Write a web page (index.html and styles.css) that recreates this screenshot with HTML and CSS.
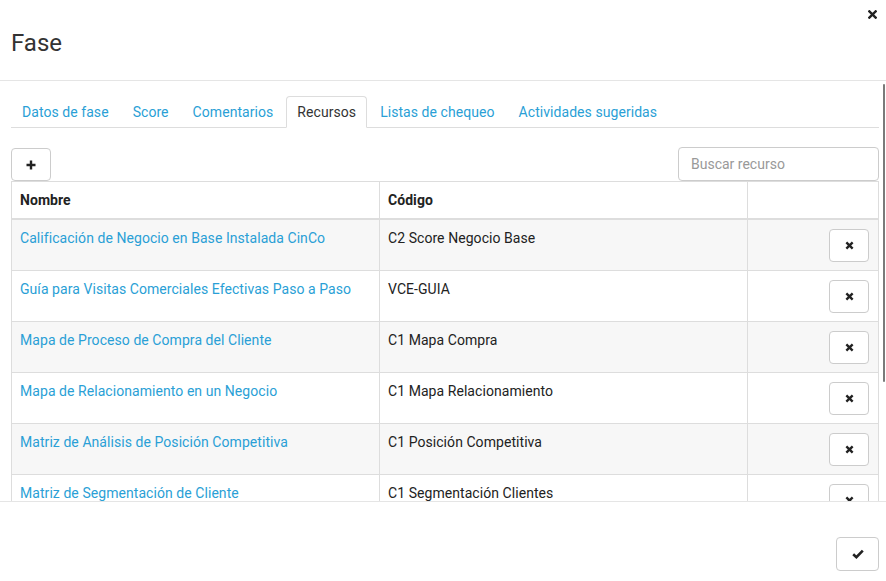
FILE: index.html
```html
<!DOCTYPE html>
<html lang="es">
<head>
<meta charset="utf-8">
<title>Fase</title>
<link rel="stylesheet" href="styles.css">
</head>
<body>
<div class="modal">
  <header class="modal-header">
    <h1 class="modal-title">Fase</h1>
    <button class="close" type="button" aria-label="Cerrar">
      <svg viewBox="0 0 10 10" width="9" height="9"><path d="M1.5 1.5 L8.5 8.5 M8.5 1.5 L1.5 8.5" stroke="#222" stroke-width="2.6" stroke-linecap="square"/></svg>
    </button>
  </header>
  <main class="modal-body">
    <ul class="tabs">
      <li><a href="#">Datos de fase</a></li>
      <li><a href="#">Score</a></li>
      <li><a href="#">Comentarios</a></li>
      <li class="active"><a href="#">Recursos</a></li>
      <li><a href="#">Listas de chequeo</a></li>
      <li><a href="#">Actividades sugeridas</a></li>
    </ul>
    <div class="toolbar">
      <button class="btn btn-add" type="button">
        <svg viewBox="0 0 10 10" width="10" height="10"><path d="M5 0.5 V9.5 M0.5 5 H9.5" stroke="#222" stroke-width="2.4"/></svg>
      </button>
      <input class="search" type="text" placeholder="Buscar recurso">
    </div>
    <table class="grid">
      <thead>
        <tr><th class="c-name">Nombre</th><th class="c-code">Código</th><th class="c-act"></th></tr>
      </thead>
      <tbody>
        <tr><td><a href="#">Calificación de Negocio en Base Instalada CinCo</a></td><td>C2 Score Negocio Base</td><td class="act"><button class="btn btn-del" type="button"><svg viewBox="0 0 10 10" width="9" height="9"><path d="M1.5 1.5 L8.5 8.5 M8.5 1.5 L1.5 8.5" stroke="#222" stroke-width="2.6"/></svg></button></td></tr>
        <tr><td><a href="#">Guía para Visitas Comerciales Efectivas Paso a Paso</a></td><td>VCE-GUIA</td><td class="act"><button class="btn btn-del" type="button"><svg viewBox="0 0 10 10" width="9" height="9"><path d="M1.5 1.5 L8.5 8.5 M8.5 1.5 L1.5 8.5" stroke="#222" stroke-width="2.6"/></svg></button></td></tr>
        <tr><td><a href="#">Mapa de Proceso de Compra del Cliente</a></td><td>C1 Mapa Compra</td><td class="act"><button class="btn btn-del" type="button"><svg viewBox="0 0 10 10" width="9" height="9"><path d="M1.5 1.5 L8.5 8.5 M8.5 1.5 L1.5 8.5" stroke="#222" stroke-width="2.6"/></svg></button></td></tr>
        <tr><td><a href="#">Mapa de Relacionamiento en un Negocio</a></td><td>C1 Mapa Relacionamiento</td><td class="act"><button class="btn btn-del" type="button"><svg viewBox="0 0 10 10" width="9" height="9"><path d="M1.5 1.5 L8.5 8.5 M8.5 1.5 L1.5 8.5" stroke="#222" stroke-width="2.6"/></svg></button></td></tr>
        <tr><td><a href="#">Matriz de Análisis de Posición Competitiva</a></td><td>C1 Posición Competitiva</td><td class="act"><button class="btn btn-del" type="button"><svg viewBox="0 0 10 10" width="9" height="9"><path d="M1.5 1.5 L8.5 8.5 M8.5 1.5 L1.5 8.5" stroke="#222" stroke-width="2.6"/></svg></button></td></tr>
        <tr><td><a href="#">Matriz de Segmentación de Cliente</a></td><td>C1 Segmentación Clientes</td><td class="act"><button class="btn btn-del" type="button"><svg viewBox="0 0 10 10" width="9" height="9"><path d="M1.5 1.5 L8.5 8.5 M8.5 1.5 L1.5 8.5" stroke="#222" stroke-width="2.6"/></svg></button></td></tr>
      </tbody>
    </table>
    <span class="scroll-thumb" aria-hidden="true"></span>
  </main>
  <footer class="modal-footer">
    <button class="btn btn-ok" type="button">
      <svg viewBox="0 0 12 10" width="12" height="10"><path d="M1.2 5.2 L4.4 8.2 L10.8 1.6" fill="none" stroke="#222" stroke-width="2.6"/></svg>
    </button>
  </footer>
</div>
</body>
</html>
```

FILE: styles.css
```css
* { box-sizing: border-box; }
html, body { margin: 0; padding: 0; background: #fff; }
body {
  font-family: Roboto, "Liberation Sans", Arial, sans-serif;
  font-size: 14px;
  line-height: 20px;
  letter-spacing: 0.06px;
  color: #222;
}
.modal {
  width: 886px;
  height: 581px;
  display: flex;
  flex-direction: column;
  overflow: hidden;
}
.modal-header {
  height: 81px;
  flex: none;
  border-bottom: 1px solid #e5e5e5;
  display: flex;
  justify-content: space-between;
  align-items: flex-start;
  padding: 0 9px 0 11px;
}
.modal-title {
  margin: 29px 0 0;
  font-size: 24px;
  line-height: 28px;
  font-weight: 400;
  letter-spacing: 0;
  color: #333;
}
.close {
  margin-top: 10px;
  padding: 0;
  border: 0;
  background: none;
  width: 9px;
  height: 9px;
  display: flex;
}
.modal-body {
  position: relative;
  height: 420px;
  flex: none;
  overflow: hidden;
  padding: 15px 7px 0 11px;
}
.scroll-thumb {
  position: absolute;
  top: 3px;
  right: 1px;
  width: 2px;
  height: 298px;
  background: #7a7a7a;
  border-radius: 1px;
}
.tabs {
  list-style: none;
  margin: 0;
  padding: 0;
  display: flex;
  border-bottom: 1px solid #ddd;
}
.tabs li { margin-bottom: -1px; }
.tabs a {
  display: block;
  padding: 5px 10px;
  margin-right: 2px;
  line-height: 20px;
  color: #2a9fd6;
  text-decoration: none;
  border: 1px solid transparent;
  border-radius: 4px 4px 0 0;
}
.tabs .active a {
  color: #333;
  background: #fff;
  border-color: #ddd #ddd transparent;
}
.toolbar {
  margin-top: 19px;
  display: flex;
  justify-content: space-between;
  align-items: flex-end;
  height: 34px;
}
.btn {
  border: 1px solid #ccc;
  border-radius: 4px;
  background: #fff;
  padding: 0;
  display: flex;
  align-items: center;
  justify-content: center;
}
.btn-add { width: 40px; height: 33px; }
.search {
  width: 201px;
  height: 34px;
  border: 1px solid #ccc;
  border-radius: 4px;
  padding: 0 12px;
  font: inherit;
  color: #333;
}
.search::placeholder { color: #999; }
.grid {
  width: 868px;
  border-collapse: collapse;
  border: 1px solid #ddd;
}
.grid th, .grid td {
  border: 1px solid #ddd;
  padding: 8px 8px;
  text-align: left;
  vertical-align: top;
  line-height: 20px;
}
.grid th {
  font-weight: 700;
  border-bottom-width: 2px;
  color: #222;
}
.c-name { width: 368px; }
.c-code { width: 368px; }
.grid tbody tr:nth-child(odd) td { background: #f7f7f7; }
.grid td { height: 51px; }
.grid a { color: #2a9fd6; text-decoration: none; }
.grid td.act { padding-right: 9px; }
.btn-del { width: 40px; height: 33px; margin: 1px 0 0 auto; }
.modal-footer {
  flex: 1;
  border-top: 1px solid #e5e5e5;
  display: flex;
  justify-content: flex-end;
  align-items: flex-start;
  padding: 35px 7px 0 0;
}
.btn-ok { width: 43px; height: 34px; }
```
